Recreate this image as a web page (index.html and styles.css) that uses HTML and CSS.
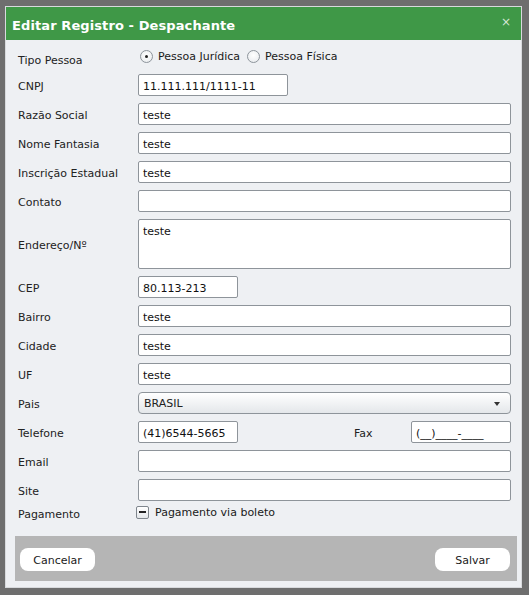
FILE: index.html
```html
<!DOCTYPE html>
<html lang="pt-BR">
<head>
<meta charset="utf-8">
<title>Editar Registro - Despachante</title>
<link rel="stylesheet" href="styles.css">
</head>
<body>
<div class="backdrop">
  <div class="modal">
    <div class="modal-header">
      <span class="modal-title">Editar Registro - Despachante</span>
      <span class="close">×</span>
    </div>
    <div class="modal-body">
      <div class="form">
        <label class="lbl lbl-tipo">Tipo Pessoa</label>
        <div class="radios">
          <span class="radio checked"></span><span class="opt">Pessoa Jurídica</span>
          <span class="radio"></span><span class="opt">Pessoa Física</span>
        </div>

        <label class="lbl">CNPJ</label>
        <div class="field"><div class="input w150">11.111.111/1111-11</div></div>

        <label class="lbl">Razão Social</label>
        <div class="field"><div class="input">teste</div></div>

        <label class="lbl">Nome Fantasia</label>
        <div class="field"><div class="input">teste</div></div>

        <label class="lbl">Inscrição Estadual</label>
        <div class="field"><div class="input">teste</div></div>

        <label class="lbl">Contato</label>
        <div class="field"><div class="input"></div></div>

        <label class="lbl">Endereço/Nº</label>
        <div class="field"><div class="input textarea">teste</div></div>

        <label class="lbl">CEP</label>
        <div class="field"><div class="input w100">80.113-213</div></div>

        <label class="lbl">Bairro</label>
        <div class="field"><div class="input">teste</div></div>

        <label class="lbl">Cidade</label>
        <div class="field"><div class="input">teste</div></div>

        <label class="lbl">UF</label>
        <div class="field"><div class="input">teste</div></div>

        <label class="lbl">Pais</label>
        <div class="field"><div class="select"><span>BRASIL</span><span class="arrow"></span></div></div>

        <label class="lbl">Telefone</label>
        <div class="field split">
          <div class="input w100">(41)6544-5665</div>
          <span class="fax-lbl">Fax</span>
          <div class="input w100">(__)____-____</div>
        </div>

        <label class="lbl">Email</label>
        <div class="field"><div class="input"></div></div>

        <label class="lbl">Site</label>
        <div class="field"><div class="input"></div></div>

        <label class="lbl lbl-pag">Pagamento</label>
        <div class="check-row"><span class="checkbox"></span><span class="opt">Pagamento via boleto</span></div>
      </div>
      <div class="modal-footer">
        <button class="btn">Cancelar</button>
        <button class="btn">Salvar</button>
      </div>
    </div>
  </div>
</div>
</body>
</html>
```
FILE: styles.css
```css
html, body {
  margin: 0;
  padding: 0;
}
body {
  width: 529px;
  height: 595px;
  background: #6e6e6e;
  font-family: "DejaVu Sans", Verdana, sans-serif;
  font-size: 11px;
  color: #1a1a1a;
  overflow: hidden;
}
.backdrop {
  padding: 6px 0 0 5px;
}
.modal {
  width: 517px;
  height: 582px;
  box-sizing: border-box;
  border: 1px solid #d8dadd;
  background: #eef0f3;
  display: flex;
  flex-direction: column;
}
.modal-header {
  height: 33px;
  box-sizing: border-box;
  background: #3f9847;
  display: flex;
  align-items: center;
  justify-content: space-between;
  padding: 4px 10px 0 6px;
}
.modal-title {
  color: #ffffff;
  font-weight: bold;
  font-size: 13px;
  letter-spacing: 0.1px;
}
.close {
  color: #d3e6d3;
  font-size: 12px;
  line-height: 1;
  margin-top: -7px;
}
.modal-body {
  padding: 5px 5px 0 12px;
  flex: 1;
  display: flex;
  flex-direction: column;
}
.form {
  display: grid;
  grid-template-columns: 120px 373px;
  row-gap: 7px;
}
.lbl {
  display: flex;
  align-items: center;
  height: 100%;
  box-sizing: border-box;
  padding-top: 3px;
  color: #222;
}
.lbl-tipo {
  padding-top: 9px;
}
.lbl-pag {
  align-items: flex-start;
  padding-top: 0;
}
.radios {
  height: 21px;
  margin-top: 1px;
  display: flex;
  align-items: center;
  padding-left: 2px;
}
.radio {
  width: 11px;
  height: 11px;
  border: 1px solid #8d949b;
  border-radius: 50%;
  background: radial-gradient(circle at 50% 40%, #ffffff 0%, #e6e9ec 100%);
  display: inline-flex;
  align-items: center;
  justify-content: center;
  margin-right: 5px;
}
.radio.checked::after {
  content: "";
  width: 3px;
  height: 3px;
  border-radius: 50%;
  background: #222;
}
.opt {
  margin-right: 7px;
  color: #1a1a1a;
}
.field {
  display: flex;
}
.input {
  height: 22px;
  box-sizing: border-box;
  flex: 1;
  background: #ffffff;
  border: 1px solid #8e949a;
  border-radius: 2px;
  padding: 5px 4px 0 4px;
  color: #111;
  line-height: 14px;
}
.input.w150 {
  flex: none;
  width: 150px;
}
.input.w100 {
  flex: none;
  width: 100px;
}
.input.textarea {
  height: 50px;
  padding-top: 5px;
}
.split {
  align-items: center;
}
.fax-lbl {
  margin-left: 116px;
  width: 58px;
  padding-top: 3px;
  color: #222;
}
.select {
  flex: 1;
  height: 22px;
  box-sizing: border-box;
  border: 1px solid #8e949a;
  border-radius: 4px;
  background: linear-gradient(#ffffff, #e4e7ea);
  display: flex;
  align-items: center;
  justify-content: space-between;
  padding: 1px 10px 0 5px;
  color: #222;
}
.arrow {
  width: 0;
  height: 0;
  border-left: 3.5px solid transparent;
  border-right: 3.5px solid transparent;
  border-top: 4px solid #333;
}
.check-row {
  height: 18px;
  display: flex;
  align-items: center;
  margin-left: -2px;
  margin-top: -5px;
}
.checkbox {
  width: 11px;
  height: 11px;
  border: 1px solid #7f868d;
  border-radius: 2px;
  background: linear-gradient(#ffffff, #e3e6e9);
  display: inline-flex;
  align-items: center;
  justify-content: center;
  margin-right: 6px;
}
.checkbox::after {
  content: "";
  width: 7px;
  height: 2px;
  background: #222;
}
.modal-footer {
  margin: 15px 0 0 -3px;
  width: 502px;
  height: 45px;
  box-sizing: border-box;
  background: #b5b5b5;
  display: flex;
  justify-content: space-between;
  align-items: flex-start;
  padding: 12px 7px 0 5px;
}
.btn {
  width: 75px;
  height: 23px;
  border: none;
  border-radius: 8px;
  background: #ffffff;
  font-family: "DejaVu Sans", Verdana, sans-serif;
  font-size: 11px;
  color: #1a1a1a;
  padding: 2px 0 0 0;
}
```
